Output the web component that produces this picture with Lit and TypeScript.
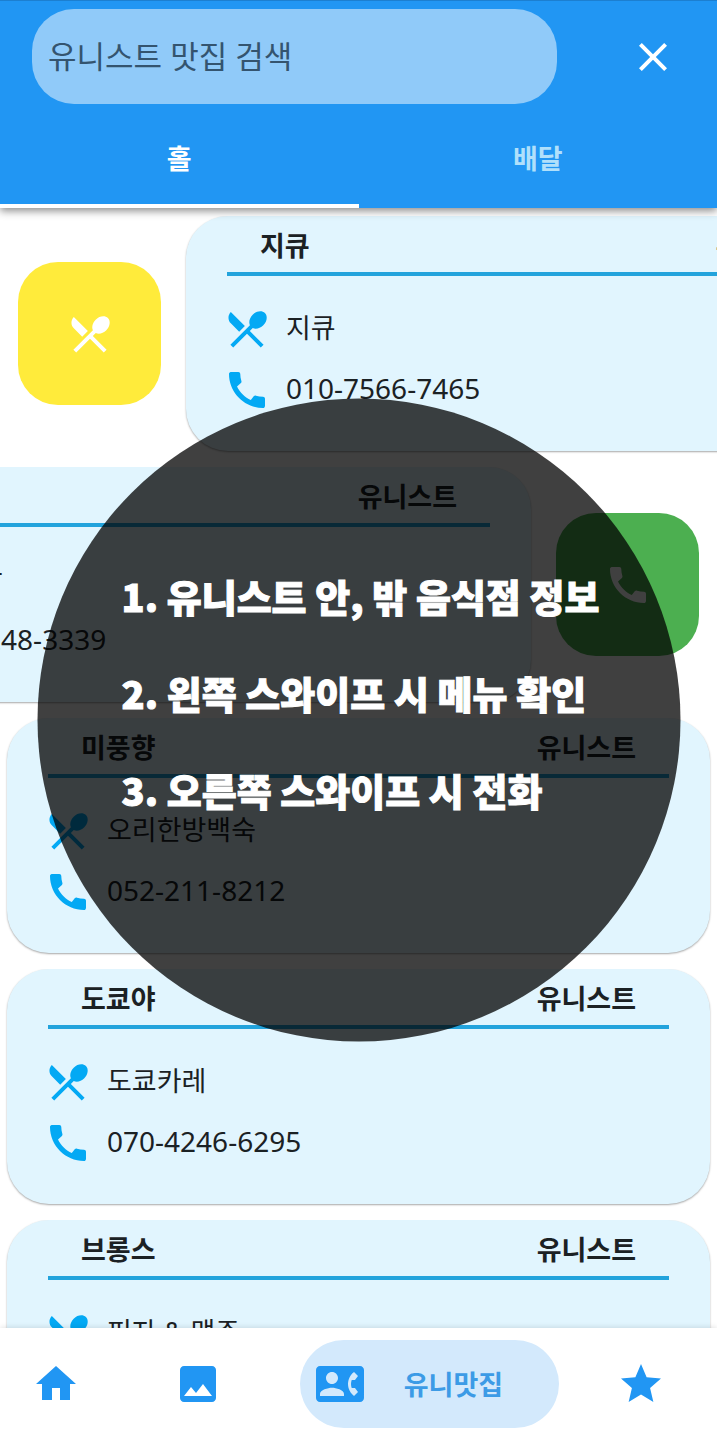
import { LitElement, html, css, svg, nothing } from "lit";
import { customElement, property, state } from "lit/decorators.js";
import { classMap } from "lit/directives/class-map.js";

const ICONS = {
  close: svg`<path d="M19 6.41 17.59 5 12 10.59 6.41 5 5 6.41 10.59 12 5 17.59 6.41 19 12 13.41 17.59 19 19 17.59 13.41 12z"/>`,
  menu: svg`<path d="M8.1 13.34l2.83-2.83L3.91 3.5c-1.56 1.56-1.56 4.09 0 5.66l4.19 4.18zm6.78-1.81c1.53.71 3.68.21 5.27-1.38 1.91-1.91 2.28-4.65.81-6.12-1.46-1.46-4.2-1.1-6.12.81-1.59 1.59-2.09 3.74-1.38 5.27L3.7 19.87l1.41 1.41L12 14.41l6.88 6.88 1.41-1.41L13.41 13l1.47-1.47z"/>`,
  call: svg`<path d="M20.01 15.38c-1.23 0-2.42-.2-3.53-.56-.35-.12-.74-.03-1.01.24l-1.57 1.97c-2.83-1.35-5.48-3.9-6.89-6.83l1.95-1.66c.27-.28.35-.67.24-1.02-.37-1.11-.56-2.3-.56-3.53 0-.54-.45-.99-.99-.99H4.19C3.65 3 3 3.24 3 3.99 3 13.28 10.73 21 20.01 21c.71 0 .99-.63.99-1.18v-3.45c0-.54-.45-.99-.99-.99z"/>`,
  home: svg`<path d="M10 20v-6h4v6h5v-8h3L12 3 2 12h3v8z"/>`,
  image: svg`<path d="M21 19V5c0-1.1-.9-2-2-2H5c-1.1 0-2 .9-2 2v14c0 1.1.9 2 2 2h14c1.1 0 2-.9 2-2zM8.5 13.5l2.5 3.01L14.5 12l4.5 6H5l3.5-4.5z"/>`,
  contact: svg`<path d="M22 3H2C.9 3 0 3.9 0 5v14c0 1.1.9 2 2 2h20c1.1 0 1.99-.9 1.99-2L24 5c0-1.1-.9-2-2-2zM8 6c1.66 0 3 1.34 3 3s-1.34 3-3 3-3-1.34-3-3 1.34-3 3-3zm6 12H2v-1c0-2 4-3.1 6-3.1s6 1.1 6 3.1v1zm3.85-4h1.64L21 16l-1.99 1.99c-1.31-.98-2.28-2.38-2.73-3.99-.18-.64-.28-1.31-.28-2s.1-1.36.28-2c.45-1.62 1.42-3.01 2.73-3.99L21 8l-1.51 2h-1.64c-.22.63-.35 1.3-.35 2s.13 1.37.35 2z"/>`,
  star: svg`<path d="M12 17.27 18.18 21l-1.64-7.03L22 9.24l-7.19-.61L12 2 9.19 8.63 2 9.24l5.46 4.73L5.82 21z"/>`,
};

type IconName = keyof typeof ICONS;

const icon = (name: IconName) =>
  html`<svg class="icon" viewBox="0 0 24 24" aria-hidden="true">${ICONS[name]}</svg>`;

const iconStyles = css`
  .icon {
    display: block;
    flex: none;
    width: 48px;
    height: 48px;
    fill: currentColor;
  }
  button {
    font: inherit;
    color: inherit;
    background: none;
    border: 0;
    padding: 0;
    cursor: pointer;
  }
`;

interface Restaurant {
  name: string;
  place: string;
  food: string;
  phone: string;
  swipe?: "menu" | "call";
}

const RESTAURANTS: Restaurant[] = [
  { name: "지큐", place: "유니스트", food: "지큐", phone: "010-7566-7465", swipe: "menu" },
  { name: "마라탕", place: "유니스트", food: "마라탕", phone: "052-248-3339", swipe: "call" },
  { name: "미풍향", place: "유니스트", food: "오리한방백숙", phone: "052-211-8212" },
  { name: "도쿄야", place: "유니스트", food: "도쿄카레", phone: "070-4246-6295" },
  { name: "브롱스", place: "유니스트", food: "피자 & 맥주", phone: "052-217-8220" },
];

@customElement("restaurant-row")
export class RestaurantRow extends LitElement {
  @property({ attribute: false }) data!: Restaurant;

  static styles = [
    iconStyles,
    css`
      :host {
        display: block;
      }
      .row {
        display: flex;
        overflow: hidden;
        padding-bottom: 4px;
      }
      .row.call {
        justify-content: flex-end;
      }
      .slot {
        flex: none;
        width: 100%;
        box-sizing: border-box;
        padding: 0 7px;
      }
      .action {
        flex: none;
        width: 179px;
        display: grid;
        place-items: center;
      }
      .action button {
        display: grid;
        place-items: center;
        width: 143px;
        height: 143px;
        border-radius: 40px;
        color: #fff;
      }
      .menu .action button {
        background: #ffeb3b;
      }
      .call .action button {
        background: #4caf50;
      }
      .card {
        box-sizing: border-box;
        padding-bottom: 31px;
        border-radius: 42px;
        background: #e1f5fe;
        color: #1b2124;
        box-shadow: 0 1px 2px rgba(0, 0, 0, 0.35);
      }
      .head {
        display: flex;
        justify-content: space-between;
        align-items: center;
        height: 56px;
        box-sizing: border-box;
        margin: 0 41px;
        padding: 0 33px;
        font-size: 27px;
        font-weight: 700;
      }
      .name {
        margin: 0;
        font: inherit;
      }
      .rule {
        height: 4px;
        margin: 0 41px 22px;
        border: 0;
        background: #22a3dc;
      }
      .line {
        display: flex;
        align-items: center;
        gap: 15px;
        height: 61px;
        margin-left: 37px;
        font-size: 28px;
        white-space: nowrap;
      }
      .line .icon {
        color: #03a9f4;
      }
      .line .text {
        padding-bottom: 4px;
        color: inherit;
        text-decoration: none;
      }
      .line .food {
        font-size: 27px;
      }
    `,
  ];

  render() {
    const { name, place, food, phone, swipe } = this.data;
    const action = (kind: "menu" | "call", label: string) =>
      swipe === kind
        ? html`<div class="action"><button type="button" aria-label=${label}>${icon(kind)}</button></div>`
        : nothing;
    return html`
      <div class=${classMap({ row: true, menu: swipe === "menu", call: swipe === "call" })}>
        ${action("menu", "메뉴")}
        <div class="slot">
          <article class="card">
            <header class="head">
              <h2 class="name">${name}</h2>
              <span>${place}</span>
            </header>
            <hr class="rule" />
            <div class="line">${icon("menu")}<span class="text food">${food}</span></div>
            <div class="line">${icon("call")}<a class="text" href="tel:${phone}">${phone}</a></div>
          </article>
        </div>
        ${action("call", "전화")}
      </div>
    `;
  }
}

@customElement("app-root")
export class AppRoot extends LitElement {
  @state() private tab = 0;

  static styles = [
    iconStyles,
    css`
      :host {
        position: relative;
        display: flex;
        flex-direction: column;
        height: 100vh;
        overflow: hidden;
        background: #fff;
        font-family: "Noto Sans", "Noto Sans CJK KR", sans-serif;
      }
      .bar {
        z-index: 1;
        flex: none;
        box-sizing: border-box;
        border-top: 1px solid #1c7fd0;
        background: #2196f3;
        color: #fff;
        box-shadow: 0 3px 8px rgba(0, 0, 0, 0.45);
      }
      .search {
        display: flex;
        align-items: center;
        justify-content: space-between;
        padding: 8px 40px 0 32px;
      }
      .field {
        box-sizing: border-box;
        flex: 0 1 525px;
        min-width: 0;
        height: 95px;
        padding: 0 16px 2px;
        border: 0;
        border-radius: 42px;
        outline: 0;
        background: #90caf9;
        color: #33526d;
        font: inherit;
        font-size: 31px;
      }
      .field::placeholder {
        color: #34546f;
        opacity: 1;
      }
      .tabs {
        display: grid;
        grid-template-columns: 1fr 1fr;
        margin-top: 8px;
      }
      .tab {
        height: 96px;
        padding-bottom: 2px;
        border-bottom: 4px solid transparent;
        font-size: 27px;
        font-weight: 700;
        color: #b0e0fb;
      }
      .tab.on {
        color: #fff;
        border-bottom-color: #fff;
      }
      .list {
        flex: 1;
        min-height: 0;
        overflow: hidden;
        display: flex;
        flex-direction: column;
        gap: 12px;
        padding-top: 8px;
      }
      .list restaurant-row {
        flex: none;
      }
      .nav {
        z-index: 1;
        flex: none;
        display: grid;
        grid-template-columns: 112fr 172fr auto 158fr;
        align-items: center;
        justify-items: center;
        height: 112px;
        background: #fff;
        color: #2196f3;
        box-shadow: 0 0 6px rgba(0, 0, 0, 0.15);
      }
      .pill {
        display: flex;
        align-items: center;
        gap: 40px;
        height: 88px;
        margin-left: 16px;
        padding: 0 56px 0 16px;
        border-radius: 44px;
        background: #d3e9fc;
        font-size: 27px;
        font-weight: 700;
      }
      .pill .text {
        padding-bottom: 2px;
        color: #3c9be6;
      }
      .last {
        padding-left: 6px;
      }
      .guide {
        position: absolute;
        z-index: 2;
        top: 50%;
        left: 50%;
        transform: translate(-50%, -50%);
        width: calc(100% - 74px);
        aspect-ratio: 1;
        border-radius: 50%;
        background: rgba(0, 0, 0, 0.75);
        display: grid;
        place-content: center;
        pointer-events: none;
      }
      .steps {
        margin: 0;
        padding: 0 0 56px 4px;
        list-style: none;
        color: #fff;
        font-family: "Noto Sans CJK KR", sans-serif;
        font-size: 38px;
        font-weight: 900;
        line-height: 97px;
        white-space: nowrap;
        -webkit-text-stroke: 1px #fff;
      }
    `,
  ];

  render() {
    return html`
      <header class="bar">
        <div class="search">
          <input class="field" type="search" aria-label="유니스트 맛집 검색" placeholder="유니스트 맛집 검색" />
          <button type="button" aria-label="닫기">${icon("close")}</button>
        </div>
        <div class="tabs" role="tablist">
          ${["홀", "배달"].map(
            (label, i) => html`<button
              type="button"
              role="tab"
              aria-selected=${this.tab === i}
              class=${classMap({ tab: true, on: this.tab === i })}
              @click=${() => (this.tab = i)}
            >${label}</button>`,
          )}
        </div>
      </header>
      <main class="list">
        ${RESTAURANTS.map((r) => html`<restaurant-row .data=${r}></restaurant-row>`)}
      </main>
      <nav class="nav">
        <button type="button" aria-label="홈">${icon("home")}</button>
        <button type="button" aria-label="사진">${icon("image")}</button>
        <button type="button" class="pill">${icon("contact")}<span class="text">유니맛집</span></button>
        <button type="button" class="last" aria-label="즐겨찾기">${icon("star")}</button>
      </nav>
      <aside class="guide">
        <ol class="steps">
          <li>1. 유니스트 안, 밖 음식점 정보</li>
          <li>2. 왼쪽 스와이프 시 메뉴 확인</li>
          <li>3. 오른쪽 스와이프 시 전화</li>
        </ol>
      </aside>
    `;
  }
}
